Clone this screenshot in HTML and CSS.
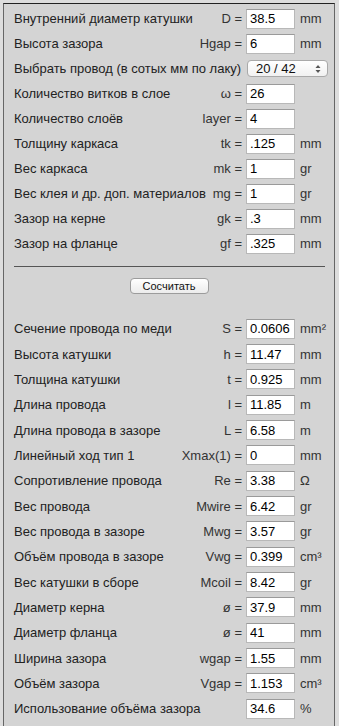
FILE: index.html
```html
<!DOCTYPE html>
<html lang="ru">
<head>
    <meta charset="UTF-8">
    <meta name="viewport" content="width=device-width, initial-scale=1.0">
    <title>Расчёт катушки</title>
    <link rel="stylesheet" href="styles.css">
</head>
<body>
    <div class="panel">
        <div class="inputs">
            <div class="row"><span class="name">Внутренний диаметр катушки</span><span class="sym">D =</span><input class="field" type="text" value="38.5"><span class="unit">mm</span></div>
            <div class="row"><span class="name">Высота зазора</span><span class="sym">Hgap =</span><input class="field" type="text" value="6"><span class="unit">mm</span></div>
            <div class="row"><span class="name">Выбрать провод (в сотых мм по лаку)</span>
                <div class="picker">
                    <select class="wire">
                        <option>20 / 42</option>
                        <option>25 / 47</option>
                        <option>30 / 52</option>
                    </select>
                    <svg class="arrows" width="6" height="10" viewBox="0 0 6 10">
                        <path d="M0.5 4 L3 1 L5.5 4 Z" fill="#555"/>
                        <path d="M0.5 6 L3 9 L5.5 6 Z" fill="#555"/>
                    </svg>
                </div>
            </div>
            <div class="row"><span class="name">Количество витков в слое</span><span class="sym">ω =</span><input class="field" type="text" value="26"><span class="unit"></span></div>
            <div class="row"><span class="name">Количество слоёв</span><span class="sym">layer =</span><input class="field" type="text" value="4"><span class="unit"></span></div>
            <div class="row"><span class="name">Толщину каркаса</span><span class="sym">tk =</span><input class="field" type="text" value=".125"><span class="unit">mm</span></div>
            <div class="row"><span class="name">Вес каркаса</span><span class="sym">mk =</span><input class="field" type="text" value="1"><span class="unit">gr</span></div>
            <div class="row"><span class="name">Вес клея и др. доп. материалов</span><span class="sym">mg =</span><input class="field" type="text" value="1"><span class="unit">gr</span></div>
            <div class="row"><span class="name">Зазор на керне</span><span class="sym">gk =</span><input class="field" type="text" value=".3"><span class="unit">mm</span></div>
            <div class="row"><span class="name">Зазор на фланце</span><span class="sym">gf =</span><input class="field" type="text" value=".325"><span class="unit">mm</span></div>
        </div>

        <hr class="divider">

        <div class="actions">
            <button class="btn" type="button">Сосчитать</button>
        </div>

        <div class="results">
            <div class="row"><span class="name">Сечение провода по меди</span><span class="sym">S =</span><input class="field" type="text" value="0.0606"><span class="unit">mm²</span></div>
            <div class="row"><span class="name">Высота катушки</span><span class="sym">h =</span><input class="field" type="text" value="11.47"><span class="unit">mm</span></div>
            <div class="row"><span class="name">Толщина катушки</span><span class="sym">t =</span><input class="field" type="text" value="0.925"><span class="unit">mm</span></div>
            <div class="row"><span class="name">Длина провода</span><span class="sym">l =</span><input class="field" type="text" value="11.85"><span class="unit">m</span></div>
            <div class="row"><span class="name">Длина провода в зазоре</span><span class="sym">L =</span><input class="field" type="text" value="6.58"><span class="unit">m</span></div>
            <div class="row"><span class="name">Линейный ход тип 1</span><span class="sym">Xmax(1) =</span><input class="field" type="text" value="0"><span class="unit">mm</span></div>
            <div class="row"><span class="name">Сопротивление провода</span><span class="sym">Re =</span><input class="field" type="text" value="3.38"><span class="unit">Ω</span></div>
            <div class="row"><span class="name">Вес провода</span><span class="sym">Mwire =</span><input class="field" type="text" value="6.42"><span class="unit">gr</span></div>
            <div class="row"><span class="name">Вес провода в зазоре</span><span class="sym">Mwg =</span><input class="field" type="text" value="3.57"><span class="unit">gr</span></div>
            <div class="row"><span class="name">Объём провода в зазоре</span><span class="sym">Vwg =</span><input class="field" type="text" value="0.399"><span class="unit">cm³</span></div>
            <div class="row"><span class="name">Вес катушки в сборе</span><span class="sym">Mcoil =</span><input class="field" type="text" value="8.42"><span class="unit">gr</span></div>
            <div class="row"><span class="name">Диаметр керна</span><span class="sym">ø =</span><input class="field" type="text" value="37.9"><span class="unit">mm</span></div>
            <div class="row"><span class="name">Диаметр фланца</span><span class="sym">ø =</span><input class="field" type="text" value="41"><span class="unit">mm</span></div>
            <div class="row"><span class="name">Ширина зазора</span><span class="sym">wgap =</span><input class="field" type="text" value="1.55"><span class="unit">mm</span></div>
            <div class="row"><span class="name">Объём зазора</span><span class="sym">Vgap =</span><input class="field" type="text" value="1.153"><span class="unit">cm³</span></div>
            <div class="row"><span class="name">Использование объёма зазора</span><span class="sym"></span><input class="field" type="text" value="34.6"><span class="unit">%</span></div>
        </div>
    </div>
</body>
</html>
```

FILE: styles.css
```css
body {
    margin: 0;
    background: #dddddd;
    font-family: "Liberation Sans", Arial, sans-serif;
    font-size: 13px;
    color: #222;
}
.panel {
    margin: 3px 0 0 3px;
    width: 332px;
    box-sizing: border-box;
    background: #d4d4d4;
    border: 1px solid #666;
    border-top-color: #222;
    padding: 2px 3px 30px 10px;
}
.row {
    display: flex;
    align-items: center;
    height: 25px;
}
.results .row {
    height: 25.35px;
}
.name {
    flex: 1;
    white-space: nowrap;
}
.sym {
    margin-right: 4px;
    color: #333;
    white-space: nowrap;
}
.field {
    width: 49px;
    height: 20px;
    box-sizing: border-box;
    margin: 0;
    padding: 0 3px;
    border: 1px solid #b8b8b8;
    border-top-color: #9a9a9a;
    background: white;
    font-family: "Liberation Sans", Arial, sans-serif;
    font-size: 13px;
    color: #000;
}
.field:focus {
    outline: none;
}
.unit {
    width: 31px;
    margin-left: 5px;
    color: #333;
}
.picker {
    position: relative;
    width: 81px;
    height: 17px;
    margin: 0 3px 0 5px;
}
.wire {
    -webkit-appearance: none;
    appearance: none;
    width: 100%;
    height: 100%;
    box-sizing: border-box;
    margin: 0;
    padding: 0 0 0 8px;
    border: 1px solid #a9a9a9;
    border-radius: 4px;
    background: linear-gradient(#ffffff, #f1f1f1);
    font-family: "Liberation Sans", Arial, sans-serif;
    font-size: 13px;
    color: #111;
}
.arrows {
    position: absolute;
    right: 7px;
    top: 4px;
}
.divider {
    margin: 10px 6px 0 0;
    border: none;
    border-top: 1px solid #555;
    height: 0;
}
.actions {
    margin: 11px -3px 0 -10px;
    text-align: center;
}
.btn {
    width: 79px;
    height: 16px;
    padding: 0;
    border: 1px solid #9c9c9c;
    border-radius: 4px;
    background: linear-gradient(#ffffff, #ececec);
    font-family: "Liberation Sans", Arial, sans-serif;
    font-size: 11px;
    color: #111;
    vertical-align: top;
}
.results {
    margin-top: 22px;
}
```
